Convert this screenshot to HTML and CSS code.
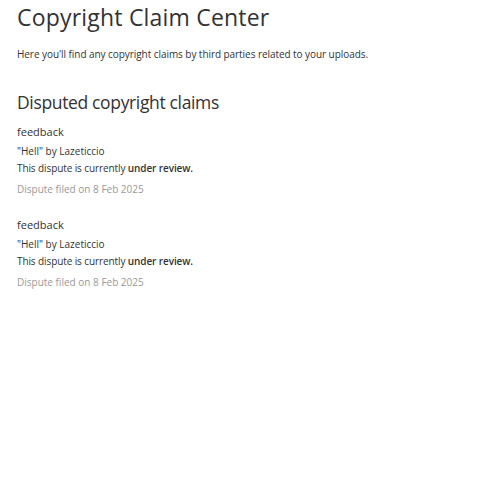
FILE: index.html
```html
<!DOCTYPE html>
<html>
<head>
<meta charset="utf-8">
<link rel="stylesheet" href="styles.css">
</head>
<body>
<main class="page">
  <h1 class="title">Copyright Claim Center</h1>
  <p class="intro">Here you'll find any copyright claims by third parties related to your uploads.</p>
  <h2 class="section-title">Disputed copyright claims</h2>
  <div class="claim">
    <div class="claim-name">feedback</div>
    <div class="claim-track">"Hell" by Lazeticcio</div>
    <div class="claim-status">This dispute is currently <strong>under review.</strong></div>
    <div class="claim-date">Dispute filed on 8 Feb 2025</div>
  </div>
  <div class="claim">
    <div class="claim-name">feedback</div>
    <div class="claim-track">"Hell" by Lazeticcio</div>
    <div class="claim-status">This dispute is currently <strong>under review.</strong></div>
    <div class="claim-date">Dispute filed on 8 Feb 2025</div>
  </div>
</main>
</body>
</html>
```
FILE: styles.css
```css
html, body { margin: 0; padding: 0; background: #fff; }
body { font-family: "Open Sans", "DejaVu Sans", sans-serif; color: #333; }
.page { padding: 2px 17px; }
.title { font-size: 23px; font-weight: 400; margin: 0; line-height: 30px; letter-spacing: 0.2px; }
.intro { font-size: 10px; margin: 14px 0 0; line-height: 16px; letter-spacing: -0.06px; }
.section-title { font-size: 17.5px; font-weight: 400; margin: 28px 0 0; line-height: 24px; letter-spacing: -0.35px; }
.claim { padding-top: 8.7px; padding-bottom: 9.3px; }
.claim-name { font-size: 11px; line-height: 18px; }
.claim-track { font-size: 10px; line-height: 17px; margin-top: 2px; }
.claim-status { font-size: 10px; line-height: 17px; letter-spacing: -0.1px; }
.claim-status strong { font-weight: 600; }
.claim-date { font-size: 10px; line-height: 17px; color: #999; margin-top: 4px; }
```
